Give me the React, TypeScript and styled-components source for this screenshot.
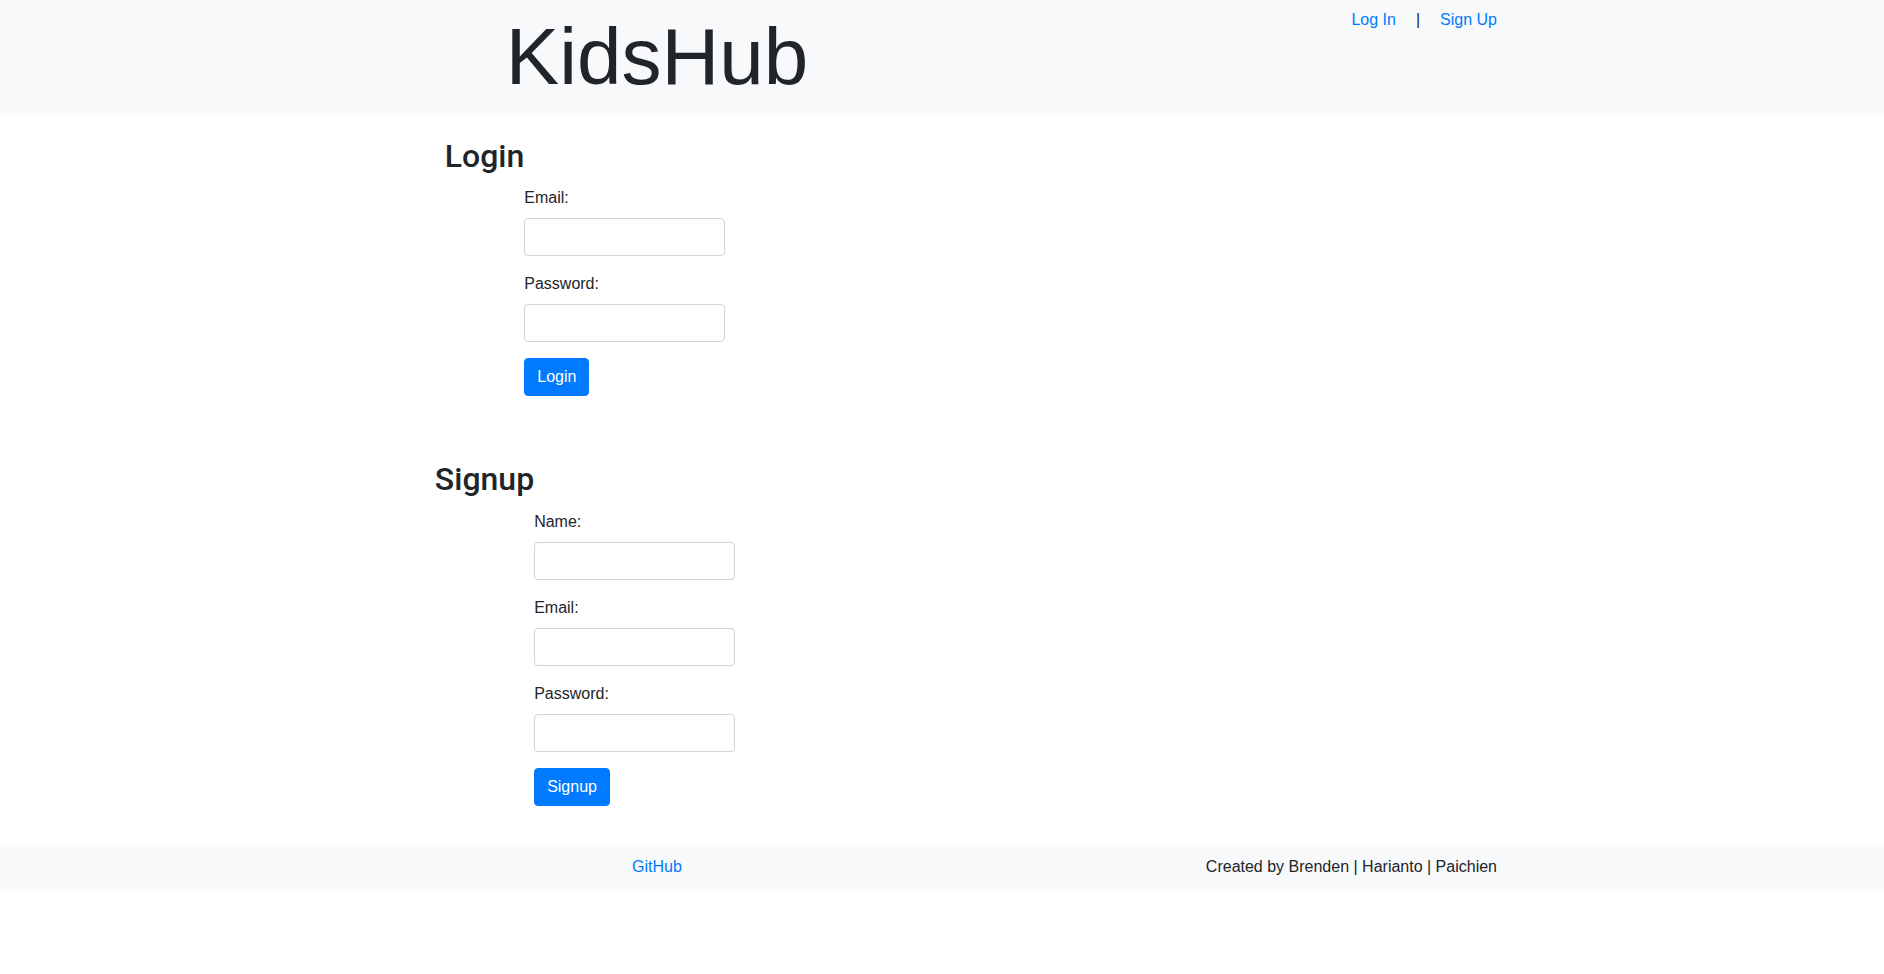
import React from "react";
import styled, { createGlobalStyle } from "styled-components";

const GlobalStyle = createGlobalStyle`
  *, *::before, *::after { box-sizing: border-box; }
  body {
    margin: 0;
    background: #ffffff;
    color: #212529;
    font-family: "Liberation Sans", Arial, sans-serif;
    font-size: 16px;
    line-height: 1.5;
  }
`;

const Bar = styled.header`
  background: #f8f9fa;
`;

const Container = styled.div`
  width: 1140px;
  margin: 0 auto;
`;

const Row = styled.div<{ $pad?: string }>`
  display: flex;
  align-items: flex-start;
  padding: ${(p) => p.$pad || "0"};
`;

const Col = styled.div<{ $align?: string }>`
  flex: 0 0 50%;
  padding: 0 15px;
  text-align: ${(p) => p.$align || "left"};
`;

const Title = styled.h1`
  margin: 0;
  padding: 9px 0 8px;
  font-size: 80px;
  font-weight: 400;
  line-height: 96px;
  color: #212529;
`;

const Nav = styled.nav`
  display: flex;
  justify-content: flex-end;
  align-items: center;
  padding-top: 8px;
`;

const Link = styled.a`
  color: #007bff;
  text-decoration: none;
  font-size: 16px;
  line-height: 24px;
  cursor: pointer;
`;

const Sep = styled.span`
  margin: 0 20px;
  color: #212529;
`;

const Main = styled.main`
  width: 1110px;
  margin: 0 auto;
  padding: 24px 0 39px;
  display: flex;
  flex-direction: column;
  gap: 64px;
`;

const Section = styled.section`
  width: 396px;
  display: grid;
  grid-template-columns: auto auto;
  justify-content: center;
`;

const Heading = styled.h2`
  grid-column: 1;
  grid-row: 1;
  margin: 0 0 11px;
  font-family: Roboto, "Liberation Sans", Arial, sans-serif;
  font-size: 32px;
  font-weight: 500;
  line-height: 1.2;
  color: #212529;
`;

const Form = styled.form`
  grid-column: 2;
  grid-row: 2;
  display: flex;
  flex-direction: column;
  align-items: flex-start;
`;

const Group = styled.div`
  margin-bottom: 16px;
`;

const Label = styled.label`
  display: block;
  margin-bottom: 8px;
  line-height: 24px;
  font-size: 16px;
`;

const Input = styled.input`
  display: block;
  width: 201px;
  height: 38px;
  padding: 6px 12px;
  font-size: 16px;
  font-family: inherit;
  color: #495057;
  background: #fff;
  border: 1px solid #ced4da;
  border-radius: 4px;
  outline: none;
`;

const Button = styled.button`
  display: inline-block;
  padding: 6px 12px;
  font-family: inherit;
  font-size: 16px;
  line-height: 24px;
  color: #fff;
  background: #007bff;
  border: 1px solid #007bff;
  border-radius: 4px;
  cursor: pointer;
`;

const Footer = styled.footer`
  background: #f8f9fa;
`;

const FooterText = styled.span`
  color: #212529;
`;

type Field = { label: string; type: string };

function AuthForm({ title, fields }: { title: string; fields: Field[] }) {
  return (
    <Section>
      <Heading>{title}</Heading>
      <Form onSubmit={(e) => e.preventDefault()}>
        {fields.map((f) => (
          <Group key={f.label}>
            <Label>{f.label}</Label>
            <Input type={f.type} />
          </Group>
        ))}
        <Button type="submit">{title}</Button>
      </Form>
    </Section>
  );
}

export default function App() {
  return (
    <>
      <GlobalStyle />
      <Bar>
        <Container>
          <Row>
            <Col $align="center">
              <Title>KidsHub</Title>
            </Col>
            <Col>
              <Nav>
                <Link>Log In</Link>
                <Sep>|</Sep>
                <Link>Sign Up</Link>
              </Nav>
            </Col>
          </Row>
        </Container>
      </Bar>
      <Main>
        <AuthForm
          title="Login"
          fields={[
            { label: "Email:", type: "email" },
            { label: "Password:", type: "password" },
          ]}
        />
        <AuthForm
          title="Signup"
          fields={[
            { label: "Name:", type: "text" },
            { label: "Email:", type: "email" },
            { label: "Password:", type: "password" },
          ]}
        />
      </Main>
      <Footer>
        <Container>
          <Row $pad="10px 0">
            <Col $align="center">
              <Link>GitHub</Link>
            </Col>
            <Col $align="right">
              <FooterText>Created by Brenden | Harianto | Paichien</FooterText>
            </Col>
          </Row>
        </Container>
      </Footer>
    </>
  );
}
